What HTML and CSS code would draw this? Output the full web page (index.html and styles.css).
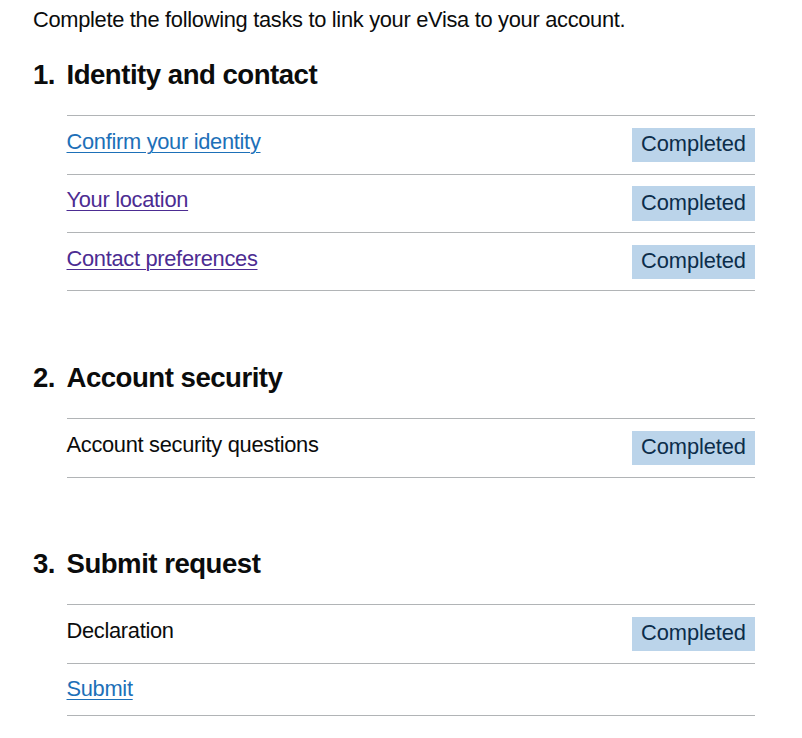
FILE: index.html
```html
<!DOCTYPE html>
<html lang="en">
<head>
<meta charset="utf-8">
<title>Link your eVisa</title>
<link rel="stylesheet" href="styles.css">
</head>
<body>
<main class="page">
  <p class="intro">Complete the following tasks to link your eVisa to your account.</p>
  <ol class="sections">
    <li class="section">
      <h2 class="section-title"><span class="section-num">1.</span><span>Identity and contact</span></h2>
      <ul class="task-list">
        <li class="task"><a class="task-link" href="#identity">Confirm your identity</a><strong class="tag">Completed</strong></li>
        <li class="task"><a class="task-link visited" href="#location">Your location</a><strong class="tag">Completed</strong></li>
        <li class="task"><a class="task-link visited" href="#contact">Contact preferences</a><strong class="tag">Completed</strong></li>
      </ul>
    </li>
    <li class="section">
      <h2 class="section-title"><span class="section-num">2.</span><span>Account security</span></h2>
      <ul class="task-list">
        <li class="task"><span class="task-name">Account security questions</span><strong class="tag">Completed</strong></li>
      </ul>
    </li>
    <li class="section">
      <h2 class="section-title"><span class="section-num">3.</span><span>Submit request</span></h2>
      <ul class="task-list">
        <li class="task"><span class="task-name">Declaration</span><strong class="tag">Completed</strong></li>
        <li class="task"><a class="task-link" href="#submit">Submit</a></li>
      </ul>
    </li>
  </ol>
</main>
</body>
</html>
```
FILE: styles.css
```css
* { box-sizing: border-box; }
html, body { margin: 0; padding: 0; background: #ffffff; }
body {
  font-family: "Liberation Sans", Arial, sans-serif;
  color: #0b0c0c;
  font-size: 21.85px;
  line-height: 28.75px;
  letter-spacing: -0.3px;
}
.page {
  width: 722px;
  margin-left: 33px;
  padding-top: 6px;
}
.intro {
  margin: 0 0 23.5px 0;
}
.sections {
  list-style: none;
  margin: 0;
  padding: 0;
}
.section {
  margin-bottom: 69.8px;
}
.section:last-child {
  margin-bottom: 0;
}
.section-title {
  display: flex;
  margin: 0 0 22.3px 0;
  font-size: 27.6px;
  line-height: 34.5px;
  font-weight: 700;
  letter-spacing: -0.5px;
}
.section-num {
  width: 33.5px;
  flex: none;
}
.task-list {
  list-style: none;
  margin: 0 0 0 33.5px;
  padding: 0;
  border-top: 1px solid #b1b4b6;
}
.task {
  display: flex;
  justify-content: space-between;
  align-items: flex-start;
  padding: 11.8px 0 11.2px;
  border-bottom: 1px solid #b1b4b6;
}
.task-link {
  color: #1d70b8;
  text-decoration: underline;
  text-decoration-thickness: 1.15px;
  text-underline-offset: 3.45px;
}
.task-link.visited { color: #4c2c92; }
.tag {
  font-weight: 400;
  background: #bbd4ea;
  color: #0c2d4a;
  letter-spacing: -0.1px;
  padding: 2.3px 9.2px 3.45px;
}
```
